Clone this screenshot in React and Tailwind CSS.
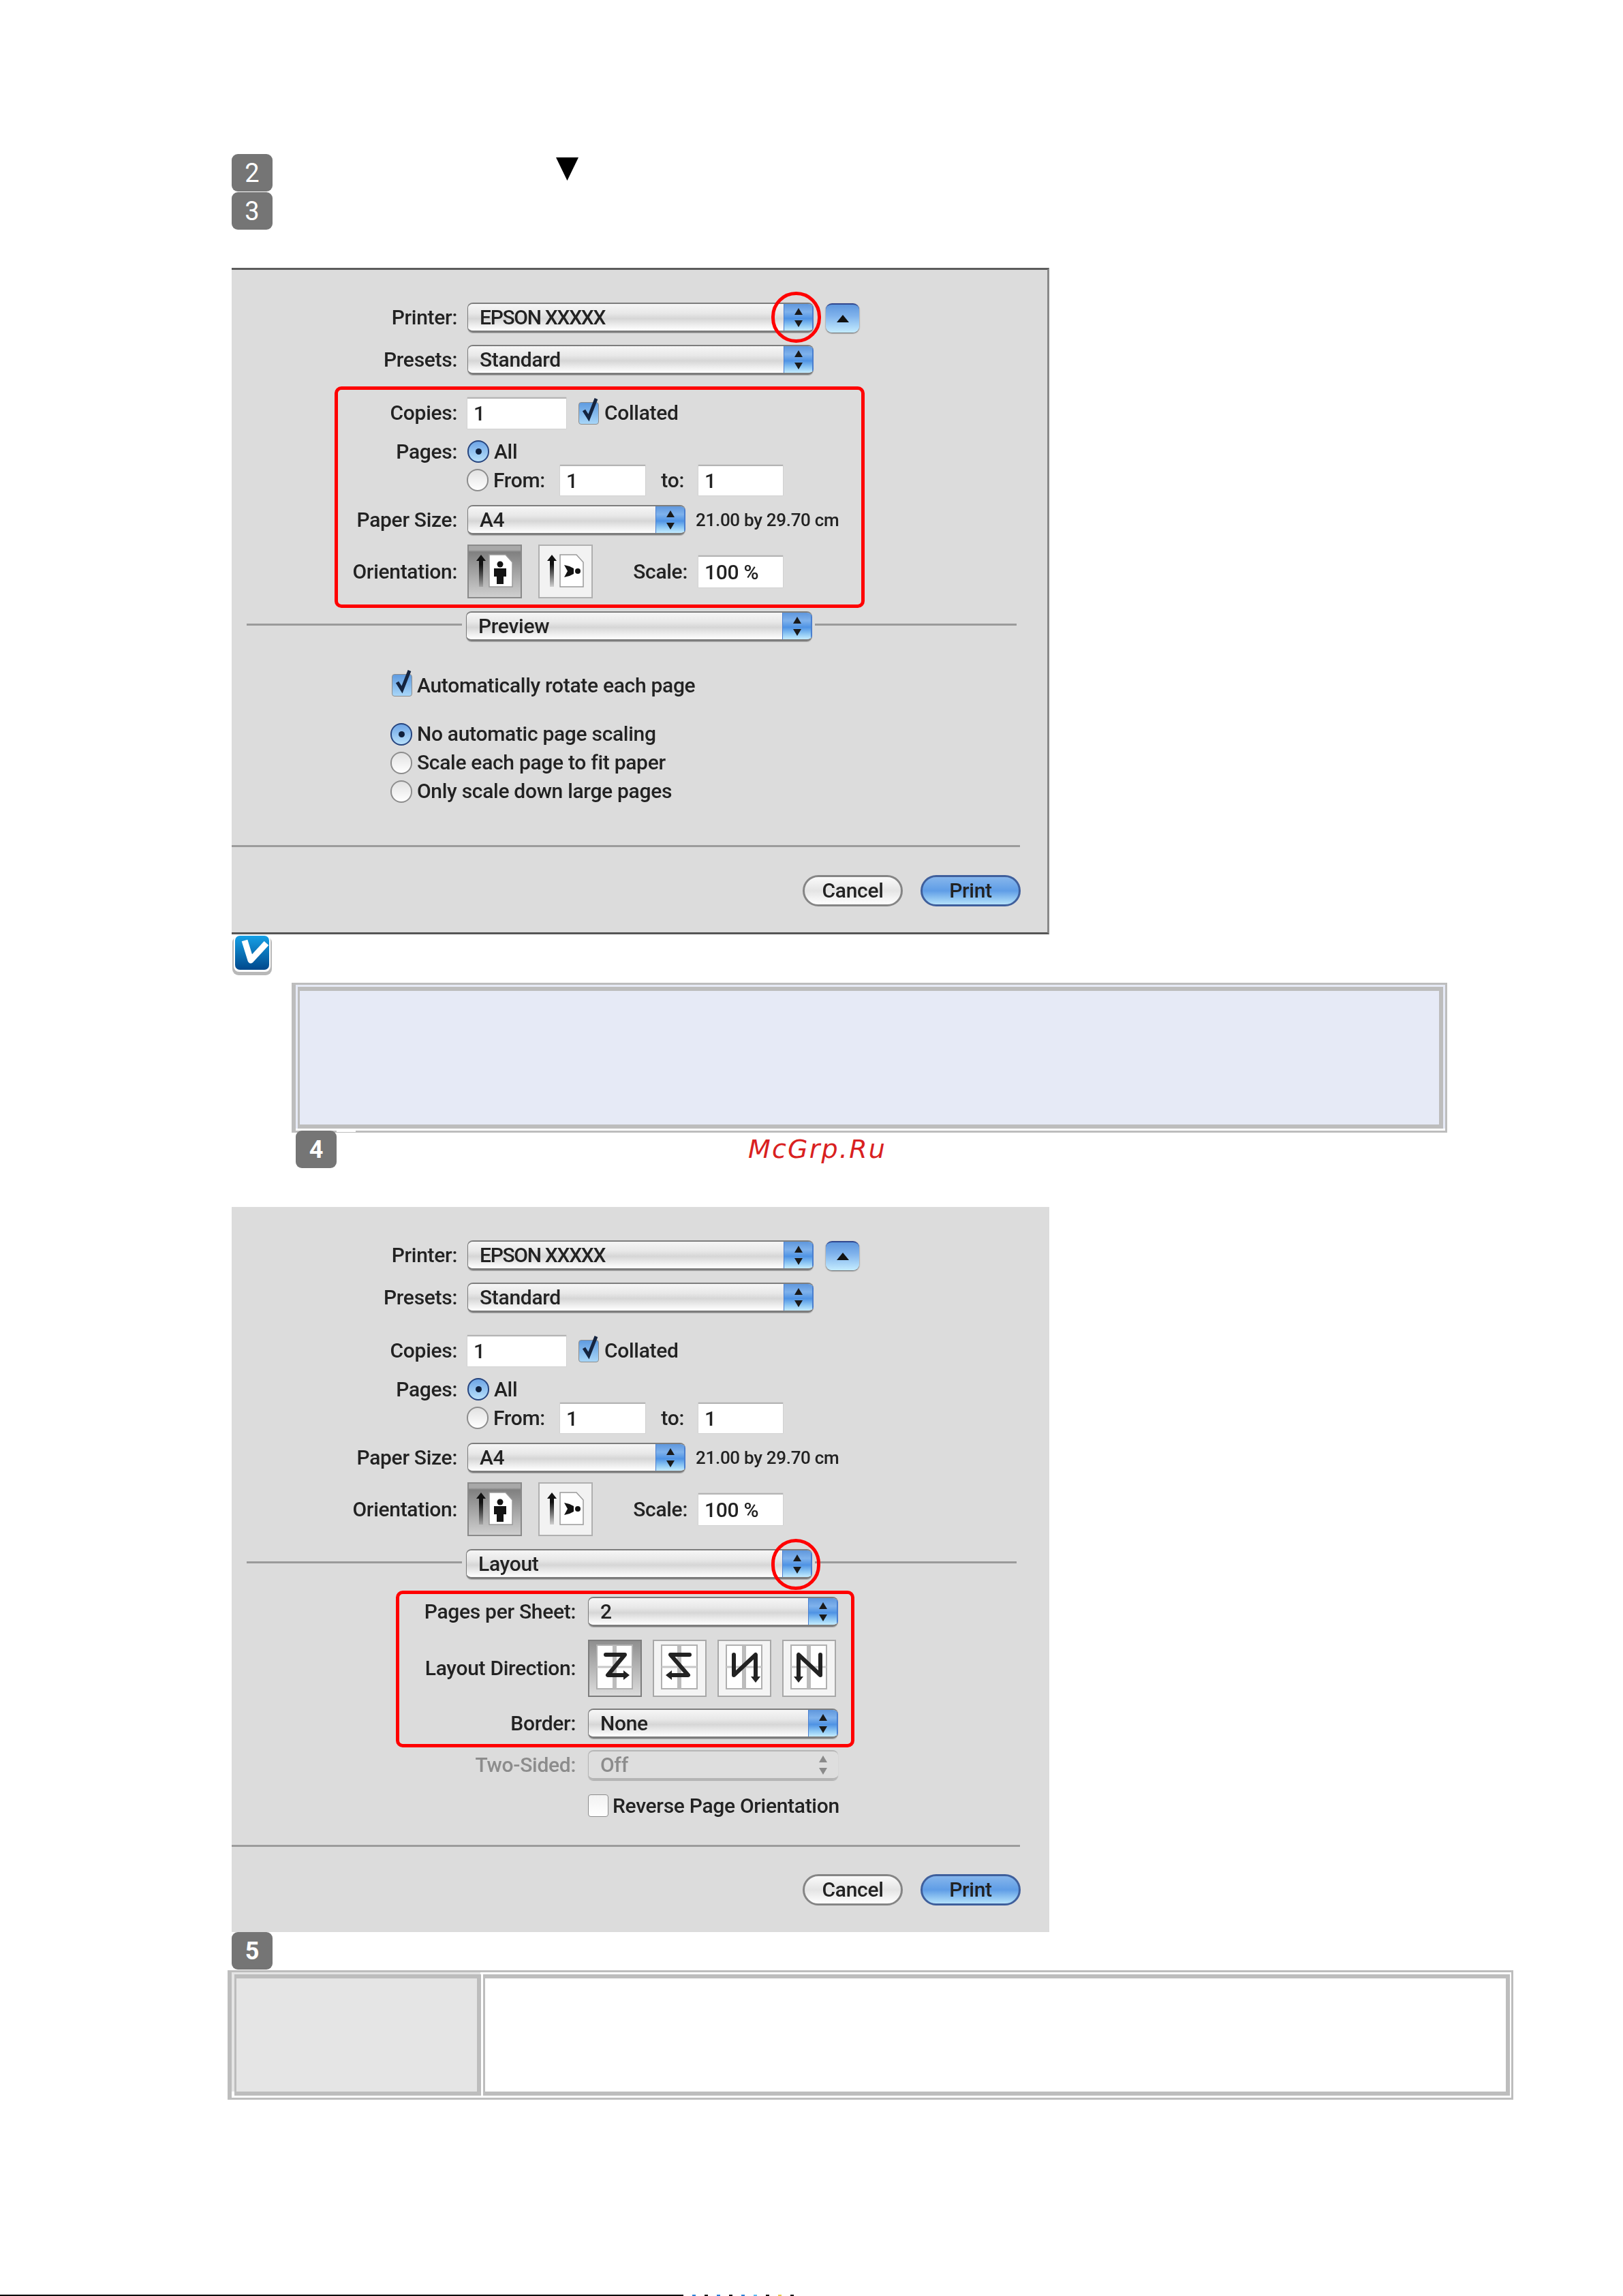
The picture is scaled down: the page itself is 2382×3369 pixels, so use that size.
function Badge({ n, bold }) {
  return (
    <div className={`flex h-[55px] w-[60px] items-center justify-center rounded-[9px] bg-[#757575] font-['Roboto',sans-serif] leading-none text-white ${bold ? 'text-[36px] font-bold' : 'text-[38px]'}`}>
      {n}
    </div>
  );
}

function Stepper({ muted, className }) {
  const fill = muted ? '#8a8a8a' : '#1a1a1a';
  return (
    <svg viewBox="0 0 20 34" className={className}>
      <path d="M10 3 L16 13 H4 Z" fill={fill} />
      <path d="M10 31 L16 21 H4 Z" fill={fill} />
    </svg>
  );
}

function Popup({ label, className, labelClass, disabled }) {
  return (
    <div className={`flex h-[44px] overflow-hidden rounded-[8px] border-t-2 border-b-[3px] border-l border-[#7d7d7d] shadow-[0_1px_1px_#aaa] ${disabled ? 'border-[#b5b5b5]' : ''} ${className}`}>
      <div className={`flex flex-1 items-center pl-[17px] text-[30px] leading-none ${labelClass || ''} ${disabled ? 'bg-[#dedede] text-[#8c8c8c]' : 'bg-[linear-gradient(#f6f6f6_0%,#e8e8e8_35%,#d6d6d6_55%,#eeeeee_80%,#ffffff_100%)]'}`}>
        {label}
      </div>
      <div className={`flex w-[44px] shrink-0 items-center justify-center ${disabled ? 'bg-[#dedede]' : 'border-r-2 border-l border-[#4a7fd0] bg-[linear-gradient(#5f97dd_0%,#7fb2ec_30%,#4f93e4_55%,#8ec8f4_80%,#c4ecff_100%)]'}`}>
        <Stepper muted={disabled} className="h-[34px] w-[20px]" />
      </div>
    </div>
  );
}

function Field({ value, className }) {
  return (
    <div className={`flex items-center border-t-2 border-[#b4b4b4] bg-white pl-[9px] text-[30px] leading-none shadow-[0_0_1px_#999] ${className}`}>
      {value}
    </div>
  );
}

function Check({ checked }) {
  return (
    <div className={`relative h-[33px] w-[30px] shrink-0 rounded-[4px] border border-[#8d8d8d] ${checked ? 'bg-[linear-gradient(#5f9be0,#a8d6f8)]' : 'bg-[linear-gradient(#f2f2f2,#ffffff)]'}`}>
      {checked && (
        <svg viewBox="0 0 30 40" className="absolute -top-[9px] left-0 h-[40px] w-[30px]">
          <path d="M7 20 L14 31 L25 3" fill="none" stroke="#15243f" strokeWidth="5" />
        </svg>
      )}
    </div>
  );
}

function Radio({ on }) {
  return (
    <div className={`flex h-[33px] w-[32px] shrink-0 items-center justify-center rounded-full border-2 ${on ? 'border-[#27457f] bg-[linear-gradient(#6ea5e6,#b8e0fa)]' : 'border-[#8d8d8d] bg-[linear-gradient(#e2e2e2,#ffffff)]'}`}>
      {on && <div className="h-[9px] w-[9px] rounded-full bg-[#10203c]" />}
    </div>
  );
}

function Row({ label, children, className, muted, wide }) {
  return (
    <div className={`flex items-center ${wide ? 'gap-[18px]' : 'gap-[15px]'} ${className}`}>
      <div className={`shrink-0 text-right text-[30px] leading-none ${wide ? 'w-[505px]' : 'w-[331px]'} ${muted ? 'text-[#8c8c8c]' : ''}`}>
        {label}
      </div>
      {children}
    </div>
  );
}

function Orient({ selected, landscape }) {
  const gradId = landscape ? 'arrow-land' : 'arrow-port';
  return (
    <div className={`h-[79px] w-[80px] shrink-0 border-2 ${selected ? 'border-[#8a8a8a] bg-[linear-gradient(#a8a8a8_0%,#a8a8a8_8%,#808080_12%,#cfcfcf_100%)]' : 'border-[#b0b0b0] bg-[#f2f2f2]'}`}>
      <svg viewBox="0 0 76 75" className="h-full w-full">
        <defs>
          <linearGradient id={gradId} x1="0" y1="0" x2="0" y2="1">
            <stop offset="0.3" stopColor="#111" />
            <stop offset="1" stopColor="#111" stopOpacity="0.15" />
          </linearGradient>
        </defs>
        <path d="M18 13 L25 22 H21 V60 H15 V22 H11 Z" fill={`url(#${gradId})`} />
        <path d="M30 13 H54 L64 24 V60 H30 Z" fill="#fff" stroke="#9a9a9a" strokeWidth="1.5" />
        {landscape ? (
          <g fill="#141414">
            <circle cx="56" cy="37" r="4" />
            <path d="M36 28 L44 30 L50 33 V41 L44 44 L36 46 L41 37 Z" />
          </g>
        ) : (
          <g fill="#141414">
            <circle cx="46" cy="27" r="4.5" />
            <path d="M37 33 H55 V45 H51 V56 H41 V45 H37 Z" />
          </g>
        )}
      </svg>
    </div>
  );
}

const directions = [
  { d: 'M24 20 H52 L27 50 H52', arrow: 'M50 43 L59 50 L50 57 Z', selected: true },
  { d: 'M52 20 H24 L50 50 H24', arrow: 'M26 43 L17 50 L26 57 Z' },
  { d: 'M22 20 V50 L54 20 V54', arrow: 'M47 52 L54 61 L61 52 Z' },
  { d: 'M54 20 V50 L22 20 V54', arrow: 'M15 52 L22 61 L29 52 Z' },
];

function Direction({ d, arrow, selected }) {
  return (
    <div className={`h-[84px] w-[79px] shrink-0 border-2 ${selected ? 'border-[#7d7d7d] bg-[linear-gradient(#8f8f8f,#dcdcdc)]' : 'border-[#a8a8a8] bg-[#f4f4f4]'}`}>
      <svg viewBox="0 0 75 80" className="h-full w-full">
        <rect x="11" y="6" width="52" height="64" fill="#fff" stroke="#b0b0b0" strokeWidth="2" />
        <path d="M37 6 V70" stroke="#bcbcbc" strokeWidth="6" />
        <path d="M11 38 H63" stroke="#c8c8c8" strokeWidth="3" />
        <path d={d} fill="none" stroke="#222" strokeWidth="6" strokeLinejoin="round" strokeLinecap="round" />
        <path d={arrow} fill="#222" />
      </svg>
    </div>
  );
}

function Pill({ label, primary }) {
  return (
    <div className={`flex h-[46px] w-[147px] items-center justify-center rounded-full border-[3px] text-[30px] leading-none ${primary ? 'border-[#3f5f9c] bg-[linear-gradient(#86b6ec_0%,#5f9de6_50%,#b4e2fb_100%)]' : 'border-[#858585] bg-[linear-gradient(#fafafa_0%,#e4e4e4_50%,#ffffff_100%)]'}`}>
      {label}
    </div>
  );
}

function PrintSettings({ menu, top }) {
  return (
    <>
      <div className={`flex items-center ${top}`}>
        <Row label="Printer:">
          <Popup label="EPSON XXXXX" labelClass="tracking-[-1.3px]" className="w-[508px]" />
        </Row>
        <div className="ml-[18px] flex h-[43px] w-[49px] items-center justify-center rounded-[9px] border-t-2 border-[#31488f] bg-[linear-gradient(#5f97dd,#7fb2ec_40%,#c4ecff)] shadow-[0_1px_2px_#555]">
          <div className="h-0 w-0 border-x-[9px] border-b-[11px] border-x-transparent border-b-[#111]" />
        </div>
      </div>
      <Row label="Presets:" className="mt-[18px]">
        <Popup label="Standard" className="w-[508px]" />
      </Row>
      <Row label="Copies:" className="mt-[33px]">
        <Field value="1" className="h-[46px] w-[145px]" />
        <div className="ml-[3px] flex items-center gap-[8px] text-[30px] leading-none">
          <Check checked />
          Collated
        </div>
      </Row>
      <Row label="Pages:" className="mt-[17px] h-[33px]">
        <div className="flex items-center gap-[7px] text-[30px] leading-none">
          <Radio on />
          All
        </div>
      </Row>
      <div className="mt-[3px] flex h-[45px] items-center pl-[345px] text-[30px] leading-none">
        <Radio />
        <span className="ml-[7px] w-[98px]">From:</span>
        <Field value="1" className="h-[45px] w-[125px]" />
        <span className="w-[78px] pr-[21px] text-right">to:</span>
        <Field value="1" className="h-[45px] w-[124px]" />
      </div>
      <Row label="Paper Size:" className="mt-[14px]">
        <Popup label="A4" className="w-[320px]" />
        <span className="text-[26px] leading-none">21.00 by 29.70 cm</span>
      </Row>
      <Row label="Orientation:" className="mt-[14px] h-[79px]">
        <Orient selected />
        <div className="ml-[9px]">
          <Orient landscape />
        </div>
        <span className="w-[124px] text-right text-[30px] leading-none">Scale:</span>
        <Field value="100 %" className="ml-px h-[47px] w-[124px]" />
      </Row>
      <div className="mt-[19px] flex items-center">
        <div className="mb-[6px] ml-[22px] h-[3px] w-[316px] bg-[#9a9a9a]" />
        <Popup label={menu} className="ml-[6px] w-[508px]" />
        <div className="mb-[6px] ml-[4px] h-[3px] w-[296px] bg-[#9a9a9a]" />
      </div>
    </>
  );
}

function DialogFooter({ gap, buttons }) {
  return (
    <>
      <div className={`h-[3px] w-[1157px] bg-[#9c9c9c] ${gap}`} />
      <div className={`flex w-[1158px] justify-end gap-[26px] ${buttons}`}>
        <Pill label="Cancel" />
        <Pill label="Print" primary />
      </div>
    </>
  );
}

function Mark({ className }) {
  return <div className={`absolute border-[5px] border-[#ff0000] ${className}`} />;
}

function Dialog({ className, children }) {
  return (
    <div className={`relative flex w-[1200px] flex-col bg-[#dcdcdc] font-['Roboto',sans-serif] font-medium tracking-[-0.3px] text-[#222] blur-[0.5px] ${className}`}>
      {children}
    </div>
  );
}

function NoteIcon() {
  return (
    <svg viewBox="0 0 60 60" className="h-[60px] w-[60px]">
      <defs>
        <linearGradient id="note-blue" x1="0" y1="0" x2="0" y2="1">
          <stop offset="0" stopColor="#15a0e6" />
          <stop offset="1" stopColor="#00488c" />
        </linearGradient>
      </defs>
      <rect x="1" y="3" width="58" height="57" rx="9" fill="#b8b8b8" />
      <rect x="3" y="1" width="54" height="54" rx="8" fill="#fff" />
      <rect x="5" y="2" width="50" height="50" rx="7" fill="url(#note-blue)" />
      <path d="M19 9 L28 38 L51 13" fill="none" stroke="#fff" strokeWidth="9" strokeLinejoin="round" />
    </svg>
  );
}

const specks = ['#2b7fd6', '#111', '#2b7fd6', '#111', '#2b7fd6', '#59b7ef', '#111', '#e7c84a', '#111'];

export default function App() {
  return (
    <div className="flex h-[3369px] w-[2382px] flex-col overflow-hidden bg-white">
      <div className="pl-[340px] pt-[226px]">
        <div className="flex">
          <Badge n="2" />
          <svg viewBox="0 0 33 34" className="ml-[416px] mt-[5px] h-[34px] w-[33px]">
            <path d="M0 0 H33 L16.5 34 Z" fill="#000" />
          </svg>
        </div>
        <div className="mt-px">
          <Badge n="3" />
        </div>

        <Dialog className="mt-[56px] h-[978px] border-t-[3px] border-r-[3px] border-b-[3px] border-t-[#5c5c5c] border-r-[#8a8a8a] border-b-[#555]">
          <PrintSettings menu="Preview" top="pt-[48px]" />
          <div className="ml-[235px] mt-[48px] flex h-[33px] items-center gap-[7px] text-[30px] leading-none">
            <Check checked />
            Automatically rotate each page
          </div>
          <div className="ml-[233px] mt-[34px] flex flex-col text-[30px] leading-none">
            <div className="flex h-[42px] items-center gap-[7px]">
              <Radio on />
              No automatic page scaling
            </div>
            <div className="flex h-[42px] items-center gap-[7px]">
              <Radio />
              Scale each page to fit paper
            </div>
            <div className="flex h-[42px] items-center gap-[7px]">
              <Radio />
              Only scale down large pages
            </div>
          </div>
          <DialogFooter gap="mt-[58px]" buttons="mt-[41px]" />
          <Mark className="left-[151px] top-[171px] h-[325px] w-[778px] rounded-[10px]" />
          <Mark className="left-[792px] top-[32px] h-[75px] w-[73px] rounded-full" />
        </Dialog>

        <NoteIcon />
        <div className="ml-[88px] mt-[11px] flex h-[220px] w-[1696px] flex-col border-y-[3px] border-r-[3px] border-l-[6px] border-[#bdbdbd] bg-[#e6eaf6]">
          <div className="flex-1 pl-[3px] pr-[3px] pt-[3px]">
            <div className="h-full border-y-[6px] border-r-[6px] border-l-[3px] border-[#bdbdbd] bg-[#e6eaf6]" />
          </div>
          <div className="h-[3px] bg-white" />
        </div>

        <div className="ml-[94px] -mt-[3px] flex h-[55px] items-start">
          <Badge n="4" bold />
          <div className="h-[2px] w-[28px] bg-white" />
        </div>

        <div className="relative">
          <div className="absolute left-[758px] -top-[47px] font-['DejaVu_Sans',sans-serif] text-[38px] italic leading-none tracking-[2.2px] text-[#d92020]">
            McGrp.Ru
          </div>
        </div>

        <Dialog className="mt-[57px] h-[1064px]">
          <PrintSettings menu="Layout" top="pt-[49px]" />
          <Row wide label="Pages per Sheet:" className="mt-[26px]">
            <Popup label="2" className="w-[367px]" />
          </Row>
          <Row wide label="Layout Direction:" className="mt-[19px] h-[84px]">
            <div className="flex gap-[16px]">
              {directions.map((dir) => (
                <Direction key={dir.d} {...dir} />
              ))}
            </div>
          </Row>
          <Row wide label="Border:" className="mt-[17px]">
            <Popup label="None" className="w-[367px]" />
          </Row>
          <Row wide muted label="Two-Sided:" className="mt-[17px]">
            <Popup disabled label="Off" className="w-[367px]" />
          </Row>
          <div className="ml-[523px] mt-[21px] flex h-[33px] items-center gap-[6px] text-[30px] leading-none">
            <Check />
            Reverse Page Orientation
          </div>
          <DialogFooter gap="mt-[41px]" buttons="mt-[40px]" />
          <Mark className="left-[241px] top-[563px] h-[230px] w-[673px] rounded-[10px]" />
          <Mark className="left-[792px] top-[487px] h-[75px] w-[72px] rounded-full" />
        </Dialog>

        <Badge n="5" bold />
        <div className="-ml-[6px] mt-px flex h-[190px] w-[1887px] flex-col border-y-[3px] border-r-[3px] border-l-[6px] border-[#bdbdbd]">
          <div className="h-[3px] w-[365px] bg-[#e5e5e5]" />
          <div className="flex flex-1">
            <div className="h-[172px] w-[4px] bg-[#e5e5e5]" />
            <div className="w-[362px] border-y-[6px] border-r-[6px] border-l-[3px] border-[#bdbdbd] bg-[#e5e5e5]" />
            <div className="ml-[3px] mr-[2px] flex-1 border-y-[6px] border-r-[6px] border-l-[3px] border-[#bdbdbd]" />
          </div>
          <div className="h-[3px]" />
        </div>
      </div>

      <div className="mt-auto flex h-[2px] items-center">
        <div className="h-full w-[1003px] bg-black" />
        {specks.map((color, i) => (
          <div key={i} className="ml-[13px] h-full w-[5px]" style={{ backgroundColor: color }} />
        ))}
      </div>
    </div>
  );
}
